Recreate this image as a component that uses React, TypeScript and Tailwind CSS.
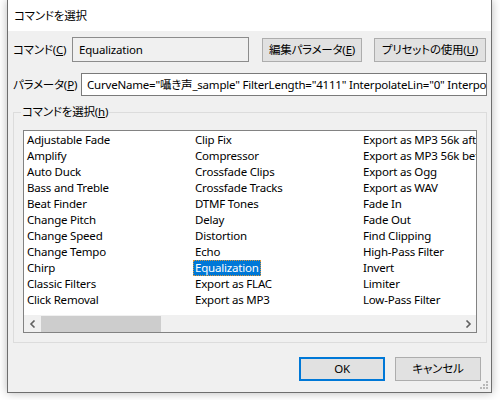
import React from "react";

const col1 = ["Adjustable Fade","Amplify","Auto Duck","Bass and Treble","Beat Finder","Change Pitch","Change Speed","Change Tempo","Chirp","Classic Filters","Click Removal"];
const col2 = ["Clip Fix","Compressor","Crossfade Clips","Crossfade Tracks","DTMF Tones","Delay","Distortion","Echo","Equalization","Export as FLAC","Export as MP3"];
const col3 = ["Export as MP3 56k after","Export as MP3 56k before","Export as Ogg","Export as WAV","Fade In","Fade Out","Find Clipping","High-Pass Filter","Invert","Limiter","Low-Pass Filter"];

function Col({ items }: { items: string[] }) {
  return (
    <div className="w-[168px] shrink-0 flex flex-col">
      {items.map((t) => {
        const sel = t === "Equalization";
        return (
          <div key={t} className="h-[16px] flex">
            <span
              className={
                sel
                  ? "px-[2px] leading-[16px] whitespace-nowrap bg-[#0078d7] text-white outline-1 outline-dotted outline-[#d8963c] -outline-offset-1"
                  : "px-[2px] leading-[16px] whitespace-nowrap"
              }
            >
              {t}
            </span>
          </div>
        );
      })}
    </div>
  );
}

export default function App() {
  return (
    <div className="w-[500px] h-[400px] bg-white overflow-hidden text-[11.5px] tracking-[-0.2px] text-black font-['Noto_Sans','Noto_Sans_CJK_JP',sans-serif] [font-feature-settings:'palt']">
      <div className="relative ml-[7px] w-[485px] h-[393px] border-x border-b border-[#6e6e6e] bg-[#f0f0f0] shadow-[0_0_9px_rgba(0,0,0,0.28)] flex flex-col">
        <div className="h-[31px] shrink-0 bg-white flex items-center pl-[6px] whitespace-nowrap">コマンドを選択</div>
        <div className="flex flex-col pl-[5px] pr-[4px] pt-[6px]">
          <div className="h-[25px] flex items-center">
            <div className="w-[59px] whitespace-nowrap">コマンド(<span className="underline">C</span>)</div>
            <div className="w-[177px] h-[25px] border border-[#8c8c8c] bg-[#f0f0f0] flex items-center pl-[6px]">Equalization</div>
            <button className="ml-[13px] w-[100px] h-[24px] border border-[#adadad] bg-[#e1e1e1] flex items-center justify-center whitespace-nowrap">
              編集パラメータ(<span className="underline">E</span>)
            </button>
            <button className="ml-[12px] w-[112px] h-[24px] border border-[#adadad] bg-[#e1e1e1] flex items-center justify-center whitespace-nowrap">
              プリセットの使用(<span className="underline">U</span>)
            </button>
          </div>
          <div className="mt-[11px] h-[23px] flex items-center">
            <div className="w-[68px] shrink-0 whitespace-nowrap">パラメータ(<span className="underline">P</span>)</div>
            <div className="flex-1 min-w-0 h-[23px] border border-[#7a7a7a] bg-white flex items-center pl-[5px] overflow-hidden whitespace-nowrap">
              CurveName="囁き声_sample" FilterLength="4111" InterpolateLin="0" InterpolationMethod="B-spline"
            </div>
          </div>
          <div className="relative mt-[16px] border border-[#dcdcdc] pt-[17px] pb-[9px] pl-[9px]">
            <span className="absolute left-[7px] top-[-9px] px-[1px] bg-[#f0f0f0] leading-[16px] whitespace-nowrap">
              コマンドを選択(<span className="underline">h</span>)
            </span>
            <div className="w-[454px] h-[203px] border border-[#828282] bg-white flex flex-col overflow-hidden">
              <div className="flex-1 flex pt-[1px] pl-[1px] overflow-hidden">
                <Col items={col1} />
                <Col items={col2} />
                <Col items={col3} />
              </div>
              <div className="h-[17px] shrink-0 bg-[#f0f0f0] flex items-center">
                <div className="w-[17px] h-full flex items-center justify-center">
                  <svg width="8" height="8" viewBox="0 0 8 8">
                    <path d="M5.5 0.5 L2 4 L5.5 7.5" fill="none" stroke="#606060" strokeWidth="1.6" />
                  </svg>
                </div>
                <div className="w-[120px] h-[16px] bg-[#cdcdcd]" />
                <div className="flex-1" />
                <div className="w-[17px] h-full flex items-center justify-center">
                  <svg width="8" height="8" viewBox="0 0 8 8">
                    <path d="M2.5 0.5 L6 4 L2.5 7.5" fill="none" stroke="#606060" strokeWidth="1.6" />
                  </svg>
                </div>
              </div>
            </div>
          </div>
          <div className="mt-[14px] flex justify-end pr-[6px] gap-[10px]">
            <button className="w-[86px] h-[24px] border-2 border-[#0078d7] bg-[#e1e1e1] flex items-center justify-center">OK</button>
            <button className="w-[86px] h-[24px] border border-[#adadad] bg-[#e1e1e1] flex items-center justify-center whitespace-nowrap">キャンセル</button>
          </div>
        </div>
        <svg className="absolute right-[2px] bottom-[2px]" width="9" height="9" viewBox="0 0 9 9">
          <rect x="6" y="0" width="2" height="2" fill="#b8b8b8" />
          <rect x="3" y="3" width="2" height="2" fill="#b8b8b8" />
          <rect x="6" y="3" width="2" height="2" fill="#b8b8b8" />
          <rect x="0" y="6" width="2" height="2" fill="#b8b8b8" />
          <rect x="3" y="6" width="2" height="2" fill="#b8b8b8" />
          <rect x="6" y="6" width="2" height="2" fill="#b8b8b8" />
        </svg>
      </div>
    </div>
  );
}
